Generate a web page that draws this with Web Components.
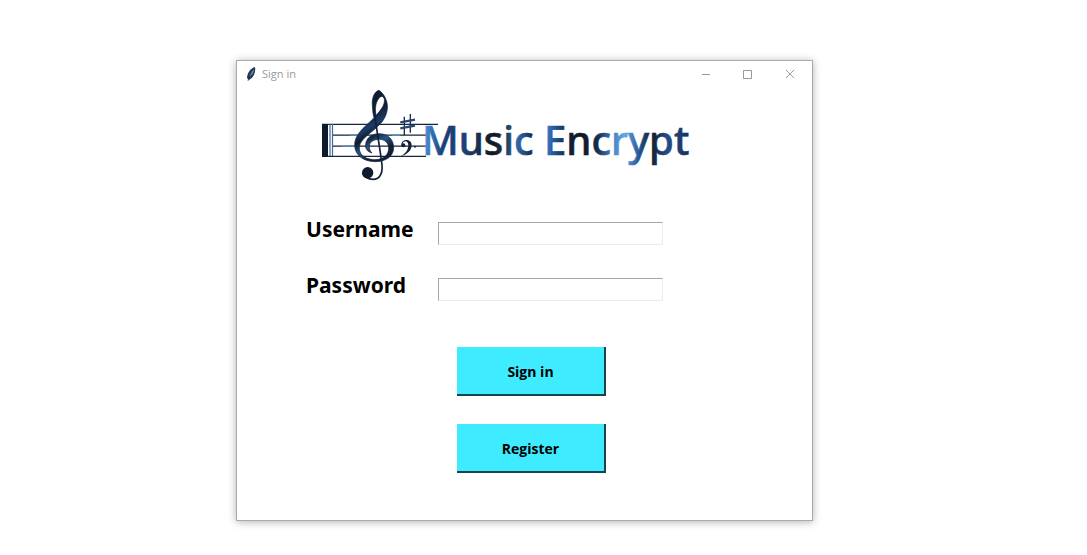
<!DOCTYPE html>
<html lang="en">
<head>
<meta charset="utf-8">
<title>Sign in</title>
<style>
  body { margin: 0; background: #fff; color: #000; font-family: "Open Sans", "Noto Sans", sans-serif; }
</style>
</head>
<body>
<sign-in-page></sign-in-page>
<script>
function define(name, html) {
  const template = document.createElement("template");
  template.innerHTML = html;
  customElements.define(name, class extends HTMLElement {
    constructor() {
      super();
      this.attachShadow({ mode: "open" }).append(template.content.cloneNode(true));
    }
  });
}

define("music-logo", `
<style>
  :host { display: block; }
  svg { display: block; width: 100%; max-width: 372px; height: auto; overflow: visible; }
  text { font: 500 40px "Noto Sans", "Open Sans", sans-serif; }
</style>
<svg viewBox="0 0 372 96" role="img" aria-label="Music Encrypt">
  <defs>
    <linearGradient id="word" gradientUnits="userSpaceOnUse" x1="103" y1="40" x2="368" y2="54">
      <stop offset="0" stop-color="#5b9bdc"/><stop offset=".04" stop-color="#2f69ae"/>
      <stop offset=".08" stop-color="#1b3f72"/><stop offset=".16" stop-color="#1d4175"/>
      <stop offset=".22" stop-color="#182c49"/><stop offset=".27" stop-color="#101620"/>
      <stop offset=".32" stop-color="#283f60"/><stop offset=".36" stop-color="#2d67ad"/>
      <stop offset=".41" stop-color="#173052"/><stop offset=".46" stop-color="#3c81d0"/>
      <stop offset=".5" stop-color="#245292"/><stop offset=".55" stop-color="#12213a"/>
      <stop offset=".6" stop-color="#101720"/><stop offset=".66" stop-color="#162c4c"/>
      <stop offset=".71" stop-color="#3978bd"/><stop offset=".76" stop-color="#68a8e0"/>
      <stop offset=".81" stop-color="#2d64a7"/><stop offset=".86" stop-color="#111a2b"/>
      <stop offset=".92" stop-color="#234c87"/><stop offset="1" stop-color="#17335e"/>
    </linearGradient>
    <linearGradient id="ink" gradientUnits="userSpaceOnUse" x1="120" y1="20" x2="265" y2="270">
      <stop offset="0" stop-color="#0f1b2d"/><stop offset=".3" stop-color="#111d30"/>
      <stop offset=".42" stop-color="#1b3c68"/><stop offset=".5" stop-color="#101c2d"/>
      <stop offset=".6" stop-color="#285686"/><stop offset=".7" stop-color="#111e31"/>
      <stop offset="1" stop-color="#142a48"/>
    </linearGradient>
  </defs>
  <g stroke="#17243a" stroke-width="1.2">
    <path d="M2 36.3H118M12 47.2H109M12 58.2H109M2 68.3H106"/>
    <path d="M10 36V68M12.500 36V68" stroke="#3c6c9e"/>
    <path d="M30 47.200H42M72 47.200H80M22 58.200H36" stroke="#5d93c4"/>
  </g>
  <path d="M2 36H8V69H2Z" fill="#10192a"/>
  <g transform="translate(-10 -3) scale(.3333)">
    <path fill="url(#ink)" stroke="#132038" stroke-width="2" fill-rule="evenodd" d="M187 60C185 35 196 18 207 16C222 25 235 50 232 72C229 100 212 118 190 136C165 157 148 170 148 190C148 212 170 224 195 224C222 224 236 208 236 190C236 172 222 163 208 163C190 163 178 172 178 185C178 196 183 200 186 204C172 201 165 190 167 178C169 158 186 146 207 146C233 146 251 162 251 188C251 214 228 230 195 230C160 230 134 210 134 180C134 155 152 136 172 118C180 110 187 104 192 98C188 84 188 72 187 60ZM198 91C214 74 225 59 223 43C220 31 212 33 206 41C196 54 195 72 198 91Z"/>
    <path d="M193 78C197 120 211 195 216 240C219 270 205 283 190 283C175 283 160 276 158 262" fill="none" stroke="#122039" stroke-width="5"/>
    <circle cx="173" cy="263" r="17" fill="#101b2c"/>
    <path d="M283 95V151M301 87V143" stroke="#1b2c45" stroke-width="4"/>
    <path d="M271 112L315 104M271 130L315 122" stroke="#244873" stroke-width="7"/>
    <path d="M274 181C273 160 305 159 305 181C304 199 290 209 273 214C288 204 295 194 295 181C295 166 281 166 278 176Z" fill="#14233a"/>
    <circle cx="280" cy="181" r="6" fill="#14233a"/>
    <circle cx="315" cy="185" r="3" fill="#14233a"/>
  </g>
  <text x="102" y="67" fill="url(#word)" stroke="url(#word)" stroke-width=".6">Music Encrypt</text>
</svg>`);

define("title-bar", `
<style>
  :host { display: flex; align-items: center; height: 26px; padding: 0 1px 0 9px; color: #999; font: 11px/16px "Open Sans", "Noto Sans", sans-serif; }
  .feather { width: 11px; height: 16px; margin-right: 5px; }
  span { flex: 1; }
  button { display: grid; place-items: center; width: 42px; height: 26px; padding: 0; border: 0; background: none; color: #999; }
  button svg { width: 10px; height: 10px; fill: none; stroke: currentColor; }
</style>
<svg class="feather" viewBox="0 0 11 16" aria-hidden="true">
  <path d="M9 1C5 2 1 7 1 12L3 14C7 12 10 7 9 1Z" fill="#25364f"/>
  <path d="M8 3C5 5 4 8 3 11C6 9 8 6 8 3Z" fill="#6793cf"/>
  <path d="M8 2C5 6 3 10 2 15" fill="none" stroke="#16202f" stroke-width=".6"/>
</svg>
<span><slot></slot></span>
<button aria-label="Minimize"><svg viewBox="0 0 10 10"><path d="M1 5.500H9"/></svg></button>
<button aria-label="Maximize"><svg viewBox="0 0 10 10"><path d="M.5 1.500H8.500V9.500H.5Z"/></svg></button>
<button aria-label="Close"><svg viewBox="0 0 10 10"><path d="M1 1L9 9M9 1L1 9"/></svg></button>`);

define("app-window", `
<style>
  :host { display: block; box-sizing: border-box; border: 1px solid #aaa; background: #fff; box-shadow: 0 1px 8px rgba(0,0,0,.3); }
</style>
<title-bar><slot name="title"></slot></title-bar>
<slot></slot>`);

define("sign-in-form", `
<style>
  :host { display: block; }
  form { display: flex; flex-direction: column; }
  .fields { display: grid; grid-template-columns: 132px minmax(0, 225px); row-gap: 25px; align-items: start; }
  label { font-size: 21px; line-height: 30px; font-weight: 700; font-family: "Noto Sans", "Open Sans", sans-serif; }
  input { box-sizing: border-box; width: 100%; height: 23px; margin: 8px 0 0; padding: 0 4px; border: 1px solid; border-color: #a5a5a5 #ececec #ececec #a5a5a5; background: #fff; font: inherit; font-size: 14px; outline: 0; }
  .actions { display: flex; flex-direction: column; gap: 28px; margin: 46px 0 47px 151px; }
  button { width: 149px; height: 49px; padding: 2px 0 0; border: solid #17454e; border-width: 0 2px 2px 0; background: #3eebff; color: #000; font: 700 14px/20px "Open Sans", "Noto Sans", sans-serif; }
</style>
<form>
  <div class="fields">
    <label for="username">Username</label><input id="username" type="text">
    <label for="password">Password</label><input id="password" type="password">
  </div>
  <div class="actions">
    <button type="submit">Sign in</button>
    <button type="button">Register</button>
  </div>
</form>`);

define("sign-in-page", `
<style>
  :host { display: grid; grid-template-columns: 236fr minmax(0, 577px) 274fr; padding: 60px 0 32px; }
  app-window { grid-column: 2; }
  music-logo { margin: 1px 83px 30px; }
  sign-in-form { margin: 0 69px; }
</style>
<app-window>
  <span slot="title">Sign in</span>
  <music-logo></music-logo>
  <sign-in-form></sign-in-form>
</app-window>`);
</script>
</body>
</html>
